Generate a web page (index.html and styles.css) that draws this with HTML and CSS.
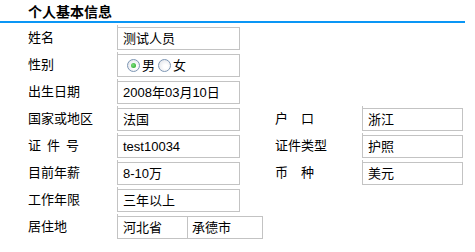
FILE: index.html
```html
<!DOCTYPE html>
<html lang="zh-CN">
<head>
<meta charset="utf-8">
<title>个人基本信息</title>
<link rel="stylesheet" href="styles.css">
</head>
<body>
<div class="panel">
  <div class="header"><h2 class="title">个人基本信息</h2></div>
  <div class="form">
    <div class="label">姓名</div>
    <div class="box">测试人员</div>
    <div class="skip"></div>

    <div class="label">性别</div>
    <div class="box radios">
      <span class="radio checked"></span><span class="rtext">男</span>
      <span class="radio"></span><span class="rtext">女</span>
    </div>
    <div class="skip"></div>

    <div class="label">出生日期</div>
    <div class="box">2008年03月10日</div>
    <div class="skip"></div>

    <div class="label">国家或地区</div>
    <div class="box">法国</div>
    <div class="spacer"></div>
    <div class="label"><span class="spread two">户 口</span></div>
    <div class="box">浙江</div>

    <div class="label"><span class="spread three">证 件 号</span></div>
    <div class="box">test10034</div>
    <div class="spacer"></div>
    <div class="label">证件类型</div>
    <div class="box">护照</div>

    <div class="label">目前年薪</div>
    <div class="box">8-10万</div>
    <div class="spacer"></div>
    <div class="label"><span class="spread two">币 种</span></div>
    <div class="box">美元</div>

    <div class="label">工作年限</div>
    <div class="box">三年以上</div>
    <div class="skip"></div>

    <div class="label">居住地</div>
    <div class="pair">
      <div class="box province">河北省</div>
      <div class="box city">承德市</div>
    </div>
    <div class="skip2"></div>
  </div>
</div>
</body>
</html>
```

FILE: styles.css
```css
html, body {
  margin: 0;
  padding: 0;
  background: #ffffff;
}

body {
  font-family: "Liberation Sans", "Noto Sans CJK SC", sans-serif;
  font-size: 13px;
  color: #000000;
}

.panel {
  width: 475px;
}

.header {
  width: 465px;
  height: 21px;
  border-bottom: 2px solid #0a96f5;
  box-sizing: content-box;
}

.title {
  margin: 0;
  padding: 4px 0 0 28px;
  font-size: 14px;
  font-weight: bold;
  line-height: 16px;
}

.form {
  display: grid;
  grid-template-columns: 89px 123px 35px 87px 101px;
  grid-auto-rows: 23px;
  row-gap: 4px;
  padding: 4px 0 0 28px;
}

.label {
  line-height: 21px;
  white-space: nowrap;
}

.spread {
  display: inline-block;
  text-align: justify;
  text-align-last: justify;
}

.spread.two { width: 39px; }
.spread.three { width: 51px; }

.box {
  position: relative;
  border: 1px solid #c3c3c3;
  padding-left: 5px;
  line-height: 21px;
  white-space: nowrap;
}

.box::before {
  content: "";
  position: absolute;
  left: -1px;
  top: -3px;
  width: 1px;
  height: 2px;
  background: #c3c3c3;
}

.skip {
  grid-column: span 3;
}

.skip2 {
  grid-column: span 2;
}

.pair {
  grid-column: span 2;
  display: flex;
  width: 146px;
}

.pair .province {
  width: 70px;
  flex: none;
  box-sizing: border-box;
  border-right: none;
  padding-left: 5px;
}

.pair .city {
  width: 76px;
  flex: none;
  box-sizing: border-box;
  padding-left: 4px;
}

.pair .city::before {
  display: none;
}

.radios {
  display: flex;
  align-items: center;
  padding-left: 9px;
}

.radio {
  width: 11px;
  height: 11px;
  border: 1px solid #7d96b4;
  border-radius: 50%;
  background: radial-gradient(circle at 60% 60%, #ffffff 20%, #dcdfe6 100%);
  position: relative;
  flex: none;
}

.radio.checked::after {
  content: "";
  position: absolute;
  left: 3px;
  top: 3px;
  width: 5px;
  height: 5px;
  border-radius: 50%;
  background: radial-gradient(circle at 40% 40%, #7ee07e 0%, #21a121 100%);
}

.rtext {
  margin: 0 3px 0 2px;
}
```
